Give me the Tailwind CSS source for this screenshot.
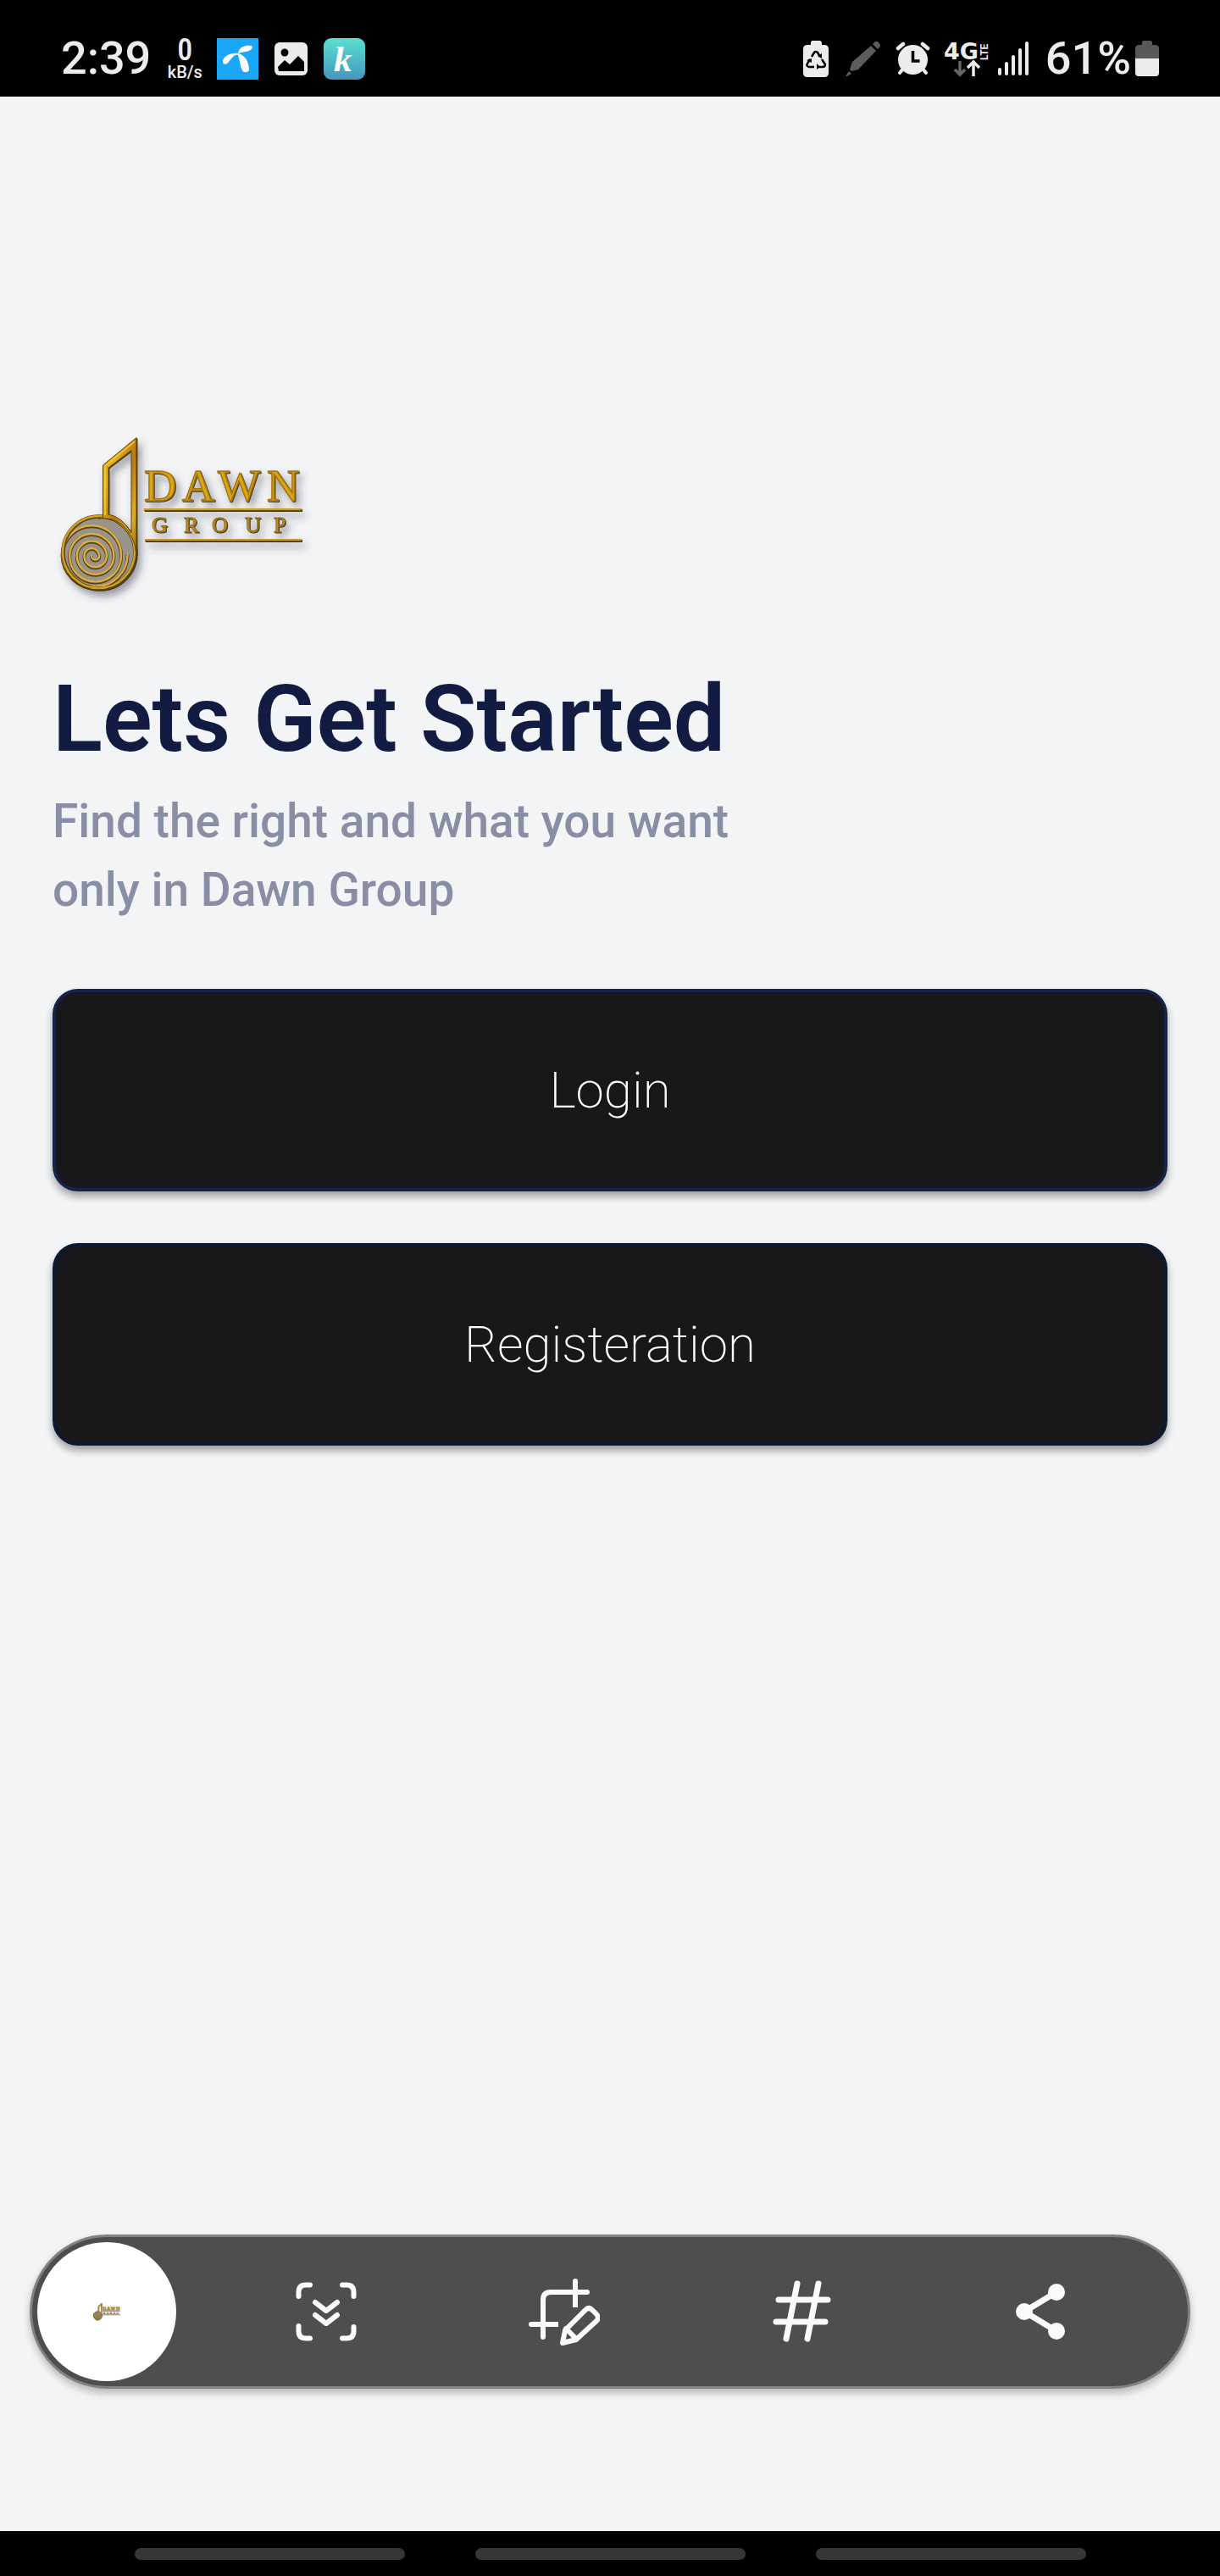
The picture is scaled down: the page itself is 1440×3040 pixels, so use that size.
<!DOCTYPE html>
<html lang="en">
<head>
<meta charset="utf-8">
<meta name="viewport" content="width=device-width, initial-scale=1">
<title>Dawn Group</title>
<script src="https://cdn.jsdelivr.net/npm/@tailwindcss/browser@4"></script>
</head>
<body class="flex min-h-screen flex-col bg-[#f2f4f6] font-['Roboto',sans-serif]">

<!-- Shared logo artwork -->
<svg class="absolute size-0" aria-hidden="true">
  <defs>
    <linearGradient id="gold" x1="0" y1="0" x2="1" y2="1">
      <stop offset="0" stop-color="#b07d10"/><stop offset=".3" stop-color="#e3b416"/><stop offset=".55" stop-color="#b9780f"/><stop offset=".8" stop-color="#e0b01c"/><stop offset="1" stop-color="#94650c"/>
    </linearGradient>
    <linearGradient id="kite" x1="0" y1="0" x2="0" y2="1">
      <stop offset="0" stop-color="#5ae0d0"/><stop offset="1" stop-color="#4596bd"/>
    </linearGradient>
    <filter id="soft" x="-10%" y="-10%" width="125%" height="125%">
      <feDropShadow dx="1" dy="1" stdDeviation="0.500" flood-color="#3f2c06" flood-opacity=".9"/>
      <feDropShadow dx="4" dy="6" stdDeviation="5" flood-color="#3a3a44" flood-opacity=".5"/>
    </filter>
    <symbol id="logo" viewBox="0 0 330 220">
      <g filter="url(#soft)">
        <circle cx="66.500" cy="152.500" r="43" fill="#99948a"/>
        <g fill="none" stroke-linecap="round">
          <path stroke="#59400f" stroke-width="4" d="M58 157a4.600 4.600 0 0 0 9.200 0a8.900 8.900 0 0 0-17.800 0a13.200 13.200 0 0 0 26.400 0a17.500 17.500 0 0 0-35 0a21.800 21.800 0 0 0 43.600 0a26.100 26.100 0 0 0-52.200 0a30.400 30.400 0 0 0 60.800 0a34.700 34.700 0 0 0-69.400-2a38.500 38.500 0 0 0 77 0"/>
          <path stroke="#dcae48" stroke-width="2.500" d="M58 156a4.600 4.600 0 0 0 9.200 0a8.900 8.900 0 0 0-17.800 0a13.200 13.200 0 0 0 26.400 0a17.500 17.500 0 0 0-35 0a21.800 21.800 0 0 0 43.600 0a26.100 26.100 0 0 0-52.200 0a30.400 30.400 0 0 0 60.800 0a34.700 34.700 0 0 0-69.400-2a38.500 38.500 0 0 0 77 0"/>
          <circle cx="67" cy="152" r="42.500" stroke="#59400f" stroke-width="4.500"/>
          <circle cx="66.500" cy="151.500" r="42.500" stroke="#d3a21e" stroke-width="2.500"/>
        </g>
        <path fill="url(#gold)" stroke="#5f430c" stroke-width="1" fill-rule="evenodd" d="M71.500 111V49L111 16.500V154Q109 132 94 119Q82 110 66 112zM78 52V107Q94 110 105 129V31.500z"/>
        <path fill="none" stroke="#f3cf3a" stroke-width="1.500" d="M74 108V50L109 21"/>
        <g font-family="'Liberation Serif',serif">
          <text x="120 165 207 265" y="91" font-size="53" fill="#d9a712" stroke="#a5760e" stroke-width="1.500">DAWN</text>
          <text x="129 167 200 239 273" y="128" font-size="26" fill="#c4932c" stroke="#8f6a1c" stroke-width="1">GROUP</text>
        </g>
        <path stroke="#6b4c10" stroke-width="3" d="M120 101.500H306M121 137.500H306"/>
        <path stroke="#c99a2c" stroke-width="2" d="M120 101H306M121 137H306"/>
      </g>
    </symbol>
  </defs>
</svg>

<header class="flex h-[114px] shrink-0 items-center justify-between bg-black px-[72px] pt-6 text-[#ececec]">
  <div class="flex items-center">
    <time class="text-[54px] leading-[60px] font-medium">2:39</time>
    <div class="ml-[18px] flex w-11 flex-col items-center font-medium">
      <span class="font-['Roboto_Condensed','Liberation_Sans_Narrow','Roboto',sans-serif] text-[36px] leading-8">0</span>
      <span class="text-[20px] leading-5">kB/s</span>
    </div>
    <svg class="ml-4 size-[49px]" viewBox="0 0 49 49" aria-label="Telenor">
      <path fill="#1ba7f8" d="M0 0h49v49H0z"/>
      <path fill="#fff" d="M25 18C26 10 34 8 41 9c2 2 0 6-7 7-4 1-7 1-8 2.500C33 20 38 28 38 38c-2 3-7 3-8 0C27 32 27 24 24.500 19.500C20 20 18 23 14 28c-3 4-7 3-7 0c0-6 8-11 18-10z"/>
    </svg>
    <svg class="ml-[19px] size-[39px]" viewBox="0 0 39 39" aria-label="Picture">
      <rect width="39" height="39" rx="6" fill="#ececec"/>
      <circle cx="12" cy="12" r="4.500" fill="#000"/>
      <path d="M4 29L12 21L18 26L28 16L35 23V34H5z" fill="#000"/>
    </svg>
    <svg class="ml-[19px] size-[49px]" viewBox="0 0 49 49" aria-label="Keyboard app">
      <rect width="49" height="49" rx="9" fill="url(#kite)"/>
      <text x="12" y="39" font-family="'Liberation Serif',serif" font-style="italic" font-weight="700" font-size="43" fill="#fff">k</text>
    </svg>
  </div>

  <div class="flex items-center">
    <svg class="h-[43px] w-[30px]" viewBox="0 0 30 43" aria-label="Battery protection">
      <path fill="#ececec" d="M11 0h8q3 0 3 3v2h3q5 0 5 5v28q0 5-5 5H5q-5 0-5-5V10q0-5 5-5h4V3q0-3 2-3z"/>
      <path fill="none" stroke="#000" stroke-width="2.500" stroke-linejoin="round" d="M10 19l3-5q2-2 4 0l3 5M22 22l4 6q0 3-3 3h-5M13 31H7q-4-1-2-4l3-5"/>
      <path fill="#000" d="M22 21v-6l-5 3zM16 27v7l4-3zM4 23l6-2v5z"/>
    </svg>
    <svg class="ml-5 h-[42px] w-[41px]" viewBox="0 0 41 42" aria-label="Pen">
      <path fill="#5c5c5c" d="M30 6l6 6-21 22-8 2-2-2 3-9zM32 4l3-3q2-1 4 1l2 3q0 2-1 3l-2 2zM4 36l3 3-5 3H0z"/>
    </svg>
    <svg class="ml-[18px] h-[40px] w-[41px]" viewBox="0 0 41 40" aria-label="Alarm">
      <g stroke="#ececec" stroke-linecap="round" fill="none"><path stroke-width="4.500" d="M3 8l6-5M38 8l-6-5"/><path stroke-width="4" d="M9 32l-4 5M32 32l4 5"/></g>
      <circle cx="20.500" cy="21.500" r="17.500" fill="#ececec"/>
      <path fill="none" stroke="#000" stroke-width="3.500" d="M20.500 11v12h8"/>
    </svg>
    <svg class="ml-4 h-[42px] w-[54px] overflow-visible" viewBox="0 0 54 42" aria-label="4G LTE">
      <text x="0" y="22" font-family="'DejaVu Sans',sans-serif" font-weight="700" font-size="27" fill="#ececec">4G</text>
      <text transform="translate(52 23) rotate(-90)" font-family="'Roboto',sans-serif" font-weight="700" font-size="12" fill="#ececec">LTE</text>
      <path fill="none" stroke="#666" stroke-width="3.500" d="M19 24v16M13 34l6 6 6-6"/>
      <path fill="none" stroke="#ececec" stroke-width="3.500" d="M35 42V26M28 32l7-7 7 7"/>
    </svg>
    <svg class="ml-[10px] h-10 w-9" viewBox="0 0 36 40" aria-label="Signal">
      <path stroke="#ececec" stroke-width="4" stroke-linecap="round" d="M2 33v5M10 26v12M18 18v20M26 10v28M34 2v36"/>
    </svg>
    <span class="ml-5 text-[54px] leading-[60px] font-medium">61%</span>
    <svg class="ml-[5px] h-[42px] w-7" viewBox="0 0 28 42" aria-label="Battery">
      <path fill="#585858" d="M10 0h8q2 0 2 2v3h3q5 0 5 4v13H0V9q0-4 5-4h3V2q0-2 2-2z"/>
      <path fill="#ececec" d="M0 21h28v17q0 4-4 4H4q-4 0-4-4z"/>
    </svg>
  </div>
</header>

<main class="flex flex-1 flex-col px-[62px] pt-[386px]">
  <svg class="-ml-3 h-[220px] w-[330px]" role="img" aria-label="Dawn Group"><use href="#logo"/></svg>
  <h1 class="mt-[66px] text-[109px] leading-[127px] font-semibold text-[#121c42]">Lets Get Started</h1>
  <p class="mt-[16px] text-[55px] leading-[81px] font-medium text-[#888fa5]">Find the right and what you want<br>only in Dawn Group</p>
  <div class="mt-[76px] flex flex-col gap-[61px]">
    <button type="button" class="h-[239px] rounded-[30px] border-4 border-[#142347] bg-[#18181a] text-[60px] font-extralight text-white shadow-[0_6px_10px_rgba(0,0,0,0.35)]">Login</button>
    <button type="button" class="h-[239px] rounded-[30px] border-4 border-[#0d1832] bg-[#18181a] text-[60px] font-extralight text-white shadow-[0_6px_10px_rgba(0,0,0,0.35)]">Registeration</button>
  </div>
</main>

<nav aria-label="Screenshot tools" class="mx-[35px] mb-[168px] flex items-center rounded-full border-3 border-[#808283] bg-[#4e4e4e] p-[6px] shadow-[0_5px_10px_rgba(0,0,0,0.25)]">
  <button type="button" aria-label="Preview" class="grid size-[164px] shrink-0 place-items-center rounded-full bg-white">
    <svg class="h-6 w-9"><use href="#logo"/></svg>
  </button>
  <div class="mr-7 ml-9 grid flex-1 grid-cols-4 place-items-center">
    <button type="button" aria-label="Scroll capture">
      <svg class="size-[84px]" viewBox="0 0 84 84" fill="none" stroke="#fafafa" stroke-width="6" stroke-linecap="round" stroke-linejoin="round">
        <path d="M23 10.500h-5q-8.500 0-8.500 8.500v5M61 10.500h5q8.500 0 8.500 8.500v5M23 73.500h-5q-8.500 0-8.500-8.500v-6M61 73.500h5q8.500 0 8.500-8.500v-5M29 31l13 10 13-10M29 46l13 10 13-10"/>
      </svg>
    </button>
    <button type="button" aria-label="Crop and edit">
      <svg class="size-[84px]" viewBox="0 0 84 84" fill="none" stroke="#fafafa" stroke-width="6" stroke-linecap="round" stroke-linejoin="round">
        <path d="M17 72V28q0-9 9-9h43M55 6v15M3 57h20"/>
        <path stroke-linecap="butt" d="M55 19v18M20 57h15"/>
        <path fill="#4e4e4e" d="M40 79l3-15 24-24q4-4 8 0l5 5q4 4 0 8L56 75z"/>
        <path d="M44 62l12 12"/>
      </svg>
    </button>
    <button type="button" aria-label="Add tag">
      <svg class="size-[84px]" viewBox="0 0 84 84" fill="none" stroke="#fafafa" stroke-width="7" stroke-linecap="round">
        <path d="M36 9L23 74M61 9L48 74M14 28h58M11 54h58"/>
      </svg>
    </button>
    <button type="button" aria-label="Share">
      <svg class="size-[84px]" viewBox="0 0 84 84" fill="#fafafa">
        <path fill="none" stroke="#fafafa" stroke-width="7" d="M61 19L23 42l38 23"/>
        <circle cx="61" cy="19" r="10"/><circle cx="23" cy="42" r="10"/><circle cx="61" cy="65" r="10"/>
      </svg>
    </button>
  </div>
</nav>

<footer class="flex h-[53px] shrink-0 items-center justify-center gap-[83px] bg-black">
  <span class="h-[14px] w-[319px] rounded-full bg-[#363636]"></span>
  <span class="h-[14px] w-[319px] rounded-full bg-[#363636]"></span>
  <span class="h-[14px] w-[319px] rounded-full bg-[#363636]"></span>
</footer>
</body>
</html>
